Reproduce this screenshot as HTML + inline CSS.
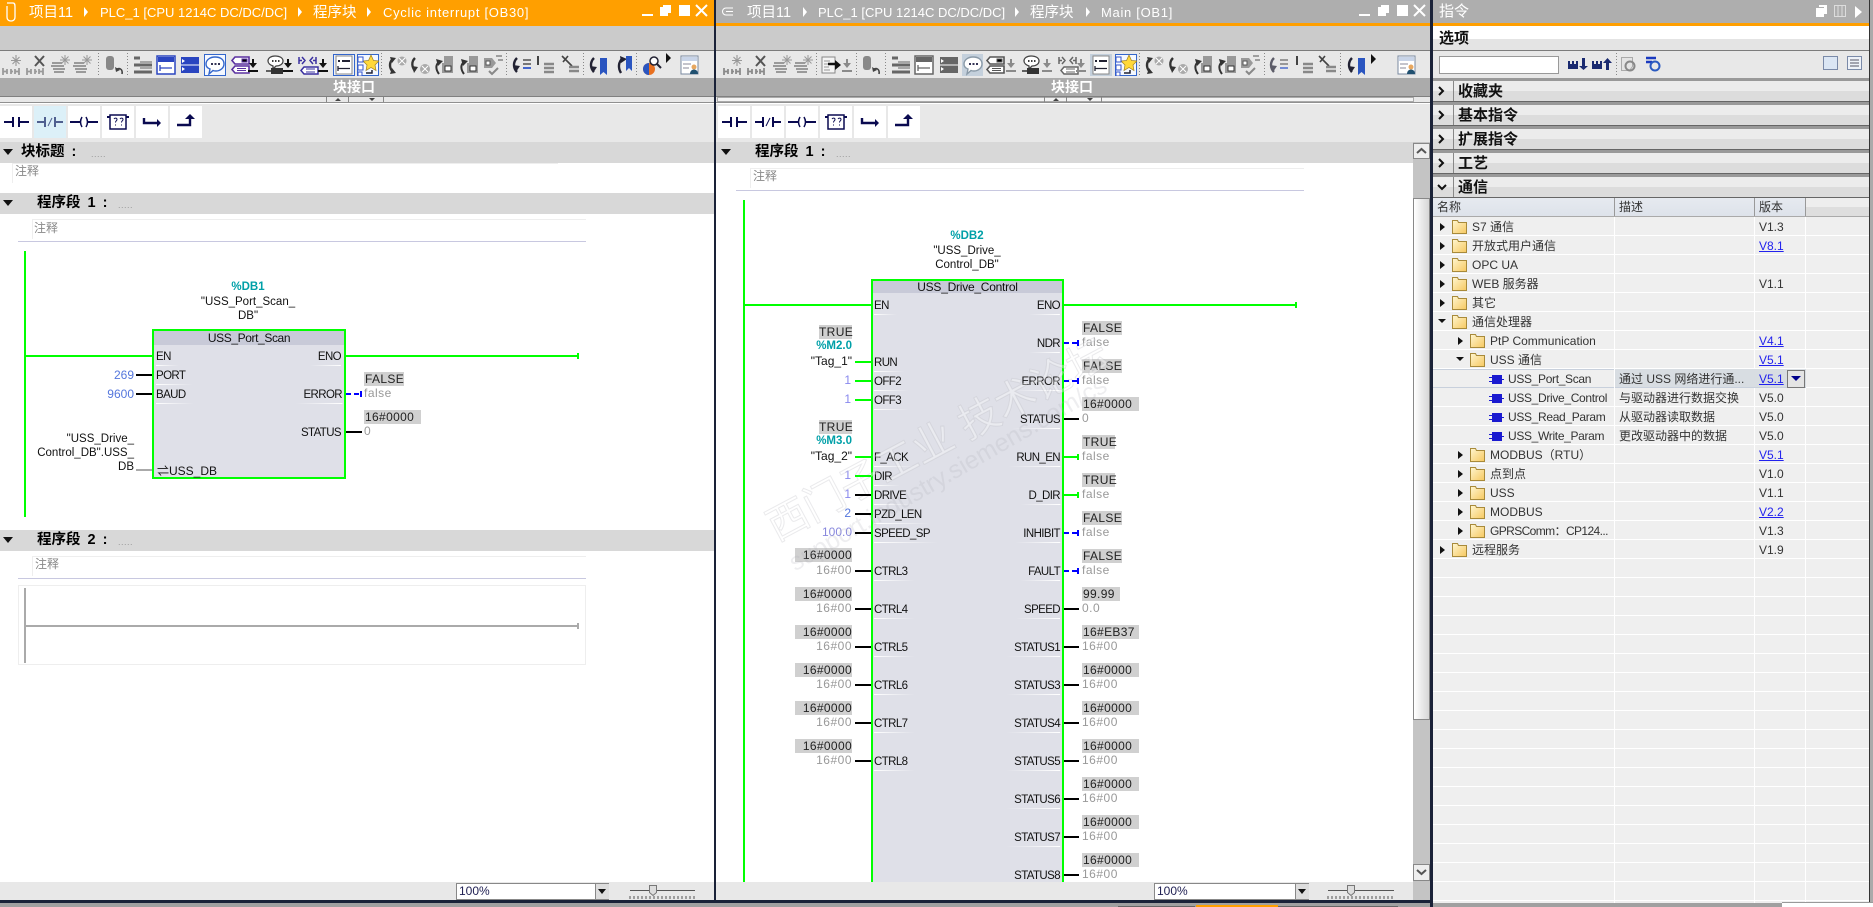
<!DOCTYPE html>
<html lang="zh"><head><meta charset="utf-8"><title>TIA Portal</title>
<style>
html,body{margin:0;padding:0;background:#fff}
#p{position:relative;width:1873px;height:907px;overflow:hidden;background:#fff;font:12px/14px "Liberation Sans","Noto Sans CJK SC",sans-serif;color:#111}
#p div,#p i,#p svg{position:absolute;display:block;font-style:normal;white-space:nowrap}
.r{transform:translateX(-100%)}
.c{transform:translateX(-50%);text-align:center}
.ti{font-size:13px;line-height:16px;top:5px;color:#fff}
.tc{font-size:14.5px}
.ts{letter-spacing:.7px}
.hd{background:#d8d8d8;height:21px}
.ht{font-size:14.500px;font-weight:bold;line-height:20px;color:#000;word-spacing:3px}
.dd{color:#999;font-size:9px;line-height:14px;letter-spacing:.5px}
.cm{color:#888;font-size:12px;line-height:16px}
.tl{color:#00a0a8;font-weight:bold;font-size:11.5px}
.sm{font-size:11.5px}
.pl,.pr{font-size:11.5px;letter-spacing:-.6px}
.pl::after,.pr::after{content:"";position:absolute;bottom:-2px;height:1px}
.pl::after{left:0;right:-8px;background:linear-gradient(90deg,#fff,rgba(255,255,255,0))}
.pr::after{right:0;left:-8px;background:linear-gradient(270deg,#fff,rgba(255,255,255,0))}
.x{background:#d0d0d0;height:14px;color:#222;letter-spacing:.35px;padding-left:1px;box-sizing:border-box}
.xr{background:#d0d0d0;height:14px;color:#222;letter-spacing:.35px;text-align:right;box-sizing:border-box}
.f{color:#999;letter-spacing:.5px}
.v{color:#5577dd}
.btn{background:#fff;width:32px;height:32px;top:106px}
.sec{left:1433px;width:436px;height:20px;background:linear-gradient(#ececec 0 50%,#dcdcdc 50%);border-bottom:1px solid #666;box-sizing:content-box}
.st{left:1458px;font-size:15px;font-weight:bold;line-height:20px;color:#111}
.n{color:#333}
.nm{color:#333;letter-spacing:-.33px}
.lk{color:#2222ee;text-decoration:underline}
</style></head><body><div id="p">

<!-- left pane chrome -->
<div style="left:0;top:0;width:714px;height:26px;background:#ff9f00"></div>
<div style="left:0;top:26px;width:714px;height:24px;background:#cbcbcb"></div>
<div style="left:0;top:50px;width:714px;height:1px;background:#7c7c7c"></div>
<div style="left:0;top:51px;width:714px;height:27px;background:#e8e8e8"></div>
<div style="left:0;top:78px;width:714px;height:18px;background:#ababab"></div>
<div style="left:0;top:96px;width:714px;height:46px;background:#e8e8e8"></div>
<div style="left:0;top:96px;width:714px;height:1px;background:#808080"></div>
<div style="left:0;top:102px;width:714px;height:1px;background:#909090"></div>
<div style="left:0;top:103px;width:714px;height:1px;background:#fff"></div>

<!-- right pane chrome -->
<div style="left:716px;top:0;width:715px;height:23px;background:#aeaeae"></div>
<div style="left:716px;top:23px;width:715px;height:3px;background:#ff9f00"></div>
<div style="left:716px;top:26px;width:715px;height:24px;background:#cbcbcb"></div>
<div style="left:716px;top:50px;width:715px;height:1px;background:#7c7c7c"></div>
<div style="left:716px;top:51px;width:715px;height:27px;background:#e8e8e8"></div>
<div style="left:716px;top:78px;width:715px;height:18px;background:#ababab"></div>
<div style="left:716px;top:96px;width:715px;height:46px;background:#e8e8e8"></div>
<div style="left:716px;top:96px;width:715px;height:1px;background:#808080"></div>
<div style="left:716px;top:102px;width:715px;height:1px;background:#909090"></div>
<div style="left:716px;top:103px;width:715px;height:1px;background:#fff"></div>

<!-- titles -->
<i class="ti tc" style="left:29px">项目11</i><i class="ti" style="left:100px">PLC_1 [CPU 1214C DC/DC/DC]</i><i class="ti tc" style="left:313px">程序块</i><i class="ti ts" style="left:383px">Cyclic interrupt [OB30]</i>
<i class="ti tc" style="left:747px">项目11</i><i class="ti" style="left:818px">PLC_1 [CPU 1214C DC/DC/DC]</i><i class="ti tc" style="left:1030px">程序块</i><i class="ti ts" style="left:1101px">Main [OB1]</i>

<i class="c" style="left:354px;top:80px;color:#fff;font-weight:bold;font-size:14px">块接口</i>
<i class="c" style="left:1072px;top:80px;color:#fff;font-weight:bold;font-size:14px">块接口</i>

<!-- ladder buttons -->
<div class="btn" style="left:0"></div><div class="btn" style="left:34px;background:#dcf0f8"></div><div class="btn" style="left:68px"></div><div class="btn" style="left:102px"></div><div class="btn" style="left:136px"></div><div class="btn" style="left:170px"></div>
<div class="btn" style="left:718px"></div><div class="btn" style="left:752px"></div><div class="btn" style="left:786px"></div><div class="btn" style="left:820px"></div><div class="btn" style="left:854px"></div><div class="btn" style="left:888px"></div>

<!-- left pane sections -->
<div class="hd" style="left:0;top:142px;width:714px"></div>
<i class="ht" style="left:21px;top:142px">块标题 :</i><i class="dd" style="left:91px;top:147px">.....</i>
<div style="left:12px;top:163px;width:546px;height:1px;background:#eee"></div><div style="left:12px;top:163px;width:1px;height:20px;background:#eee"></div>
<i class="cm" style="left:15px;top:163px">注释</i>
<div class="hd" style="left:0;top:193px;width:714px"></div>
<i class="ht" style="left:37px;top:193px">程序段 1 :</i><i class="dd" style="left:118px;top:198px">.....</i>
<div style="left:32px;top:219px;width:554px;height:1px;background:#eee"></div><div style="left:32px;top:219px;width:1px;height:20px;background:#eee"></div>
<i class="cm" style="left:34px;top:220px">注释</i>
<div style="left:18px;top:241px;width:568px;height:1px;background:#c8c8e0"></div>

<div class="hd" style="left:0;top:530px;width:714px"></div>
<i class="ht" style="left:37px;top:530px">程序段 2 :</i><i class="dd" style="left:118px;top:535px">.....</i>
<div style="left:32px;top:556px;width:554px;height:1px;background:#eee"></div><div style="left:32px;top:556px;width:1px;height:20px;background:#eee"></div>
<i class="cm" style="left:35px;top:556px">注释</i>
<div style="left:18px;top:578px;width:568px;height:1px;background:#c8c8e0"></div>
<div style="left:18px;top:585px;width:568px;height:80px;border:1px solid #eee;box-sizing:border-box"></div>

<!-- left FB block -->
<div style="left:152px;top:329px;width:194px;height:150px;box-sizing:border-box;border:2px solid #00ff00;background:#dfe0e8"></div>
<div style="left:154px;top:331px;width:190px;height:14px;background:#c8cad8;text-align:center;color:#111;letter-spacing:-.4px">USS_Port_Scan</div>
<i class="tl c" style="left:248px;top:280px">%DB1</i>
<i class="c sm" style="left:248px;top:295px">"USS_Port_Scan_</i><i class="c sm" style="left:248px;top:309px">DB"</i>
<i class="pl" style="left:156px;top:350px">EN</i><i class="pl" style="left:156px;top:369px">PORT</i><i class="pl" style="left:156px;top:388px">BAUD</i><i style="left:157px;top:464px">⇌USS_DB</i>
<i class="pr r" style="left:341px;top:350px">ENO</i><i class="pr r" style="left:342px;top:388px">ERROR</i><i class="r" style="left:341px;top:426px;font-size:11.5px;letter-spacing:-.6px">STATUS</i>
<i class="v r" style="left:134px;top:368px">269</i><i class="v r" style="left:134px;top:387px">9600</i>
<i class="r sm" style="left:134px;top:432px">"USS_Drive_</i><i class="r sm" style="left:134px;top:446px">Control_DB".USS_</i><i class="r sm" style="left:134px;top:460px">DB</i>
<div class="x" style="left:364px;top:372px;width:40px">FALSE</div><i class="f" style="left:364px;top:386px">false</i>
<div class="x" style="left:364px;top:410px;width:57px">16#0000</div><i class="f" style="left:364px;top:424px">0</i>

<!-- right pane sections -->
<div class="hd" style="left:716px;top:142px;width:697px"></div>
<i class="ht" style="left:755px;top:142px">程序段 1 :</i><i class="dd" style="left:836px;top:147px">.....</i>
<div style="left:750px;top:168px;width:554px;height:1px;background:#eee"></div><div style="left:750px;top:168px;width:1px;height:20px;background:#eee"></div>
<i class="cm" style="left:753px;top:168px">注释</i>
<div style="left:736px;top:190px;width:568px;height:1px;background:#c8c8e0"></div>

<!-- right FB block -->
<div style="left:871px;top:279px;width:193px;height:640px;box-sizing:border-box;border:2px solid #00ff00;background:#dfe0e8"></div>
<div style="left:873px;top:281px;width:189px;height:12px;line-height:12px;background:#c8cad8;text-align:center;color:#111;letter-spacing:-.25px">USS_Drive_Control</div>
<i class="tl c" style="left:967px;top:229px">%DB2</i>
<i class="c sm" style="left:967px;top:244px">"USS_Drive_</i><i class="c sm" style="left:967px;top:258px">Control_DB"</i>

<i class="pl" style="left:874px;top:299px">EN</i><i class="pl" style="left:874px;top:356px">RUN</i><i class="pl" style="left:874px;top:375px">OFF2</i><i class="pl" style="left:874px;top:394px">OFF3</i><i class="pl" style="left:874px;top:451px">F_ACK</i><i class="pl" style="left:874px;top:470px">DIR</i><i class="pl" style="left:874px;top:489px">DRIVE</i><i class="pl" style="left:874px;top:508px">PZD_LEN</i><i class="pl" style="left:874px;top:527px">SPEED_SP</i><i class="pl" style="left:874px;top:565px">CTRL3</i><i class="pl" style="left:874px;top:603px">CTRL4</i><i class="pl" style="left:874px;top:641px">CTRL5</i><i class="pl" style="left:874px;top:679px">CTRL6</i><i class="pl" style="left:874px;top:717px">CTRL7</i><i class="pl" style="left:874px;top:755px">CTRL8</i>

<i class="pr r" style="left:1060px;top:299px">ENO</i><i class="pr r" style="left:1060px;top:337px">NDR</i><i class="pr r" style="left:1060px;top:375px">ERROR</i><i class="pr r" style="left:1060px;top:413px">STATUS</i><i class="pr r" style="left:1060px;top:451px">RUN_EN</i><i class="pr r" style="left:1060px;top:489px">D_DIR</i><i class="pr r" style="left:1060px;top:527px">INHIBIT</i><i class="pr r" style="left:1060px;top:565px">FAULT</i><i class="pr r" style="left:1060px;top:603px">SPEED</i><i class="pr r" style="left:1060px;top:641px">STATUS1</i><i class="pr r" style="left:1060px;top:679px">STATUS3</i><i class="pr r" style="left:1060px;top:717px">STATUS4</i><i class="pr r" style="left:1060px;top:755px">STATUS5</i><i class="pr r" style="left:1060px;top:793px">STATUS6</i><i class="pr r" style="left:1060px;top:831px">STATUS7</i><i class="pr r" style="left:1060px;top:869px">STATUS8</i>

<!-- right inputs -->
<div class="xr" style="left:819px;top:325px;width:33px">TRUE</div><i class="tl r" style="left:852px;top:339px">%M2.0</i><i class="r" style="left:852px;top:354px">"Tag_1"</i>
<i class="v r" style="left:851px;top:373px;color:#8888ee">1</i><i class="v r" style="left:851px;top:392px;color:#8888ee">1</i>
<div class="xr" style="left:819px;top:420px;width:33px">TRUE</div><i class="tl r" style="left:852px;top:434px">%M3.0</i><i class="r" style="left:852px;top:449px">"Tag_2"</i>
<i class="v r" style="left:851px;top:468px;color:#8888ee">1</i><i class="v r" style="left:851px;top:487px;color:#8888ee">1</i><i class="v r" style="left:851px;top:506px">2</i><i class="v r" style="left:852px;top:525px;color:#8888dd">100.0</i>

<div class="xr" style="left:795px;top:548px;width:57px">16#0000</div><i class="f r" style="left:852px;top:563px">16#00</i>
<div class="xr" style="left:795px;top:587px;width:57px">16#0000</div><i class="f r" style="left:852px;top:601px">16#00</i>
<div class="xr" style="left:795px;top:625px;width:57px">16#0000</div><i class="f r" style="left:852px;top:639px">16#00</i>
<div class="xr" style="left:795px;top:663px;width:57px">16#0000</div><i class="f r" style="left:852px;top:677px">16#00</i>
<div class="xr" style="left:795px;top:701px;width:57px">16#0000</div><i class="f r" style="left:852px;top:715px">16#00</i>
<div class="xr" style="left:795px;top:739px;width:57px">16#0000</div><i class="f r" style="left:852px;top:753px">16#00</i>

<!-- right outputs -->
<div class="x" style="left:1082px;top:321px;width:40px">FALSE</div><i class="f" style="left:1082px;top:335px">false</i>
<div class="x" style="left:1082px;top:359px;width:40px">FALSE</div><i class="f" style="left:1082px;top:373px">false</i>
<div class="x" style="left:1082px;top:397px;width:57px">16#0000</div><i class="f" style="left:1082px;top:411px">0</i>
<div class="x" style="left:1082px;top:435px;width:33px">TRUE</div><i class="f" style="left:1082px;top:449px">false</i>
<div class="x" style="left:1082px;top:473px;width:33px">TRUE</div><i class="f" style="left:1082px;top:487px">false</i>
<div class="x" style="left:1082px;top:511px;width:40px">FALSE</div><i class="f" style="left:1082px;top:525px">false</i>
<div class="x" style="left:1082px;top:549px;width:40px">FALSE</div><i class="f" style="left:1082px;top:563px">false</i>
<div class="x" style="left:1082px;top:587px;width:38px">99.99</div><i class="f" style="left:1082px;top:601px">0.0</i>
<div class="x" style="left:1082px;top:625px;width:57px">16#EB37</div><i class="f" style="left:1082px;top:639px">16#00</i>
<div class="x" style="left:1082px;top:663px;width:57px">16#0000</div><i class="f" style="left:1082px;top:677px">16#00</i>
<div class="x" style="left:1082px;top:701px;width:57px">16#0000</div><i class="f" style="left:1082px;top:715px">16#00</i>
<div class="x" style="left:1082px;top:739px;width:57px">16#0000</div><i class="f" style="left:1082px;top:753px">16#00</i>
<div class="x" style="left:1082px;top:777px;width:57px">16#0000</div><i class="f" style="left:1082px;top:791px">16#00</i>
<div class="x" style="left:1082px;top:815px;width:57px">16#0000</div><i class="f" style="left:1082px;top:829px">16#00</i>
<div class="x" style="left:1082px;top:853px;width:57px">16#0000</div><i class="f" style="left:1082px;top:867px">16#00</i>

<!-- watermark -->
<i style="left:938px;top:440px;font-size:41px;line-height:46px;color:rgba(255,255,255,.35);-webkit-text-stroke:1px rgba(170,170,180,.25);transform:translate(-50%,-50%) rotate(-28deg)">西门子工业 技术论坛</i>
<i style="left:948px;top:474px;font-size:25px;line-height:28px;color:rgba(170,170,180,.2);transform:translate(-50%,-50%) rotate(-30deg)">support.industry.siemens.com/cs</i>

<!-- scrollbar -->
<div style="left:1413px;top:142px;width:17px;height:758px;background:#c4c4c4"></div>
<div style="left:1413px;top:143px;width:17px;height:16px;box-sizing:border-box;background:#eee;border:1px solid #888"></div>
<div style="left:1413px;top:198px;width:17px;height:522px;box-sizing:border-box;background:linear-gradient(90deg,#fff,#d6d6d6);border:1px solid #888"></div>
<div style="left:1413px;top:864px;width:17px;height:17px;box-sizing:border-box;background:#eee;border:1px solid #888"></div>

<!-- bottom bars -->
<div style="left:0;top:882px;width:714px;height:18px;background:#e8e8e8"></div>
<div style="left:716px;top:882px;width:697px;height:18px;background:#e8e8e8"></div>
<div style="left:456px;top:883px;width:153px;height:17px;box-sizing:border-box;background:#fff;border:1px solid #888"></div>
<i style="left:459px;top:884px;color:#225">100%</i>
<div style="left:595px;top:884px;width:13px;height:15px;background:#ddd;border-left:1px solid #888"></div>
<div style="left:1154px;top:883px;width:155px;height:17px;box-sizing:border-box;background:#fff;border:1px solid #888"></div>
<i style="left:1157px;top:884px;color:#225">100%</i>
<div style="left:1295px;top:884px;width:13px;height:15px;background:#ddd;border-left:1px solid #888"></div>
<div style="left:0;top:900px;width:1430px;height:3px;background:#1a2238"></div>
<div style="left:0;top:903px;width:1873px;height:4px;background:#a0a0a0"></div>
<div style="left:1118px;top:906px;width:77px;height:1px;background:#666"></div>
<div style="left:1196px;top:905px;width:82px;height:2px;background:#ff9f00"></div>
<div style="left:1278px;top:906px;width:120px;height:1px;background:#666"></div>

<!-- dark separators -->
<div style="left:714px;top:0;width:2px;height:903px;background:#1a2238"></div>
<div style="left:1430px;top:0;width:3px;height:907px;background:#1a2238"></div>

<!-- instructions panel -->
<div style="left:1433px;top:0;width:436px;height:23px;background:#aeaeae"></div>
<div style="left:1433px;top:23px;width:436px;height:3px;background:#ff9f00"></div>
<i style="left:1439px;top:2px;font-size:15px;line-height:20px;color:#fff">指令</i>
<div style="left:1433px;top:26px;width:436px;height:24px;background:linear-gradient(#fff 0 55%,#e4e4e4 55%)"></div>
<i class="st" style="left:1439px;top:29px">选项</i>
<div style="left:1433px;top:50px;width:436px;height:1px;background:#7c7c7c"></div>
<div style="left:1433px;top:51px;width:436px;height:27px;background:#e8e8e8"></div>
<div style="left:1439px;top:56px;width:120px;height:18px;box-sizing:border-box;background:#fff;border:1px solid #999"></div>
<div style="left:1433px;top:78px;width:436px;height:125px;background:#999"></div>
<div class="sec" style="top:81px"></div><div class="sec" style="top:105px"></div><div class="sec" style="top:129px"></div><div class="sec" style="top:153px"></div><div class="sec" style="top:177px"></div>
<i class="st" style="top:82px">收藏夹</i><i class="st" style="top:106px">基本指令</i><i class="st" style="top:130px">扩展指令</i><i class="st" style="top:154px">工艺</i><i class="st" style="top:178px">通信</i>
<div style="left:1453px;top:81px;width:1px;height:20px;background:#888"></div><div style="left:1453px;top:105px;width:1px;height:20px;background:#888"></div><div style="left:1453px;top:129px;width:1px;height:20px;background:#888"></div><div style="left:1453px;top:153px;width:1px;height:20px;background:#888"></div><div style="left:1453px;top:177px;width:1px;height:20px;background:#888"></div>

<!-- table -->
<div style="left:1433px;top:198px;width:436px;height:19px;background:linear-gradient(#e6eaf0,#dde2ea)"></div>
<div style="left:1806px;top:198px;width:63px;height:18px;background:linear-gradient(#eee 0 50%,#dedede 50%)"></div>
<div style="left:1433px;top:216px;width:436px;height:1px;background:#aaa"></div>
<div style="left:1614px;top:198px;width:1px;height:18px;background:#999"></div><div style="left:1754px;top:198px;width:1px;height:18px;background:#999"></div><div style="left:1805px;top:198px;width:1px;height:18px;background:#999"></div>
<i class="n" style="left:1437px;top:200px">名称</i><i class="n" style="left:1619px;top:200px">描述</i><i class="n" style="left:1759px;top:200px">版本</i>
<div style="left:1433px;top:217px;width:436px;height:686px;background:repeating-linear-gradient(180deg,#efefef 0 18px,#fff 18px 19px)"></div>
<div style="left:1614px;top:217px;width:1px;height:686px;background:#fff"></div><div style="left:1754px;top:217px;width:1px;height:686px;background:#fff"></div><div style="left:1805px;top:217px;width:1px;height:686px;background:#fff"></div>
<div style="left:1433px;top:369px;width:181px;height:19px;box-sizing:border-box;border-top:1px solid #c8d0dc;border-bottom:1px solid #c8d0dc"></div>
<div style="left:1615px;top:369px;width:191px;height:19px;background:#d8dde2;border-bottom:1px solid #c8d0dc;box-sizing:border-box"></div>
<div style="left:1787px;top:370px;width:18px;height:18px;box-sizing:border-box;background:#e4e4e4;border:1px solid #777"></div>

<i class="n" style="left:1472px;top:220px">S7 通信</i><i class="n" style="left:1759px;top:220px">V1.3</i>
<i class="n" style="left:1472px;top:239px">开放式用户通信</i><i class="lk" style="left:1759px;top:239px">V8.1</i>
<i class="n" style="left:1472px;top:258px">OPC UA</i>
<i class="n" style="left:1472px;top:277px">WEB 服务器</i><i class="n" style="left:1759px;top:277px">V1.1</i>
<i class="n" style="left:1472px;top:296px">其它</i>
<i class="n" style="left:1472px;top:315px">通信处理器</i>
<i class="n" style="left:1490px;top:334px">PtP Communication</i><i class="lk" style="left:1759px;top:334px">V4.1</i>
<i class="n" style="left:1490px;top:353px">USS 通信</i><i class="lk" style="left:1759px;top:353px">V5.1</i>
<i class="nm" style="left:1508px;top:372px">USS_Port_Scan</i><i class="n" style="left:1619px;top:372px">通过 USS 网络进行通...</i><i class="lk" style="left:1759px;top:372px">V5.1</i>
<i class="nm" style="left:1508px;top:391px">USS_Drive_Control</i><i class="n" style="left:1619px;top:391px">与驱动器进行数据交换</i><i class="n" style="left:1759px;top:391px">V5.0</i>
<i class="nm" style="left:1508px;top:410px">USS_Read_Param</i><i class="n" style="left:1619px;top:410px">从驱动器读取数据</i><i class="n" style="left:1759px;top:410px">V5.0</i>
<i class="nm" style="left:1508px;top:429px">USS_Write_Param</i><i class="n" style="left:1619px;top:429px">更改驱动器中的数据</i><i class="n" style="left:1759px;top:429px">V5.0</i>
<i class="n" style="left:1490px;top:448px">MODBUS（RTU）</i><i class="lk" style="left:1759px;top:448px">V5.1</i>
<i class="n" style="left:1490px;top:467px">点到点</i><i class="n" style="left:1759px;top:467px">V1.0</i>
<i class="n" style="left:1490px;top:486px">USS</i><i class="n" style="left:1759px;top:486px">V1.1</i>
<i class="n" style="left:1490px;top:505px">MODBUS</i><i class="lk" style="left:1759px;top:505px">V2.2</i>
<i class="n" style="left:1490px;top:524px;letter-spacing:-.6px">GPRSComm：CP124...</i><i class="n" style="left:1759px;top:524px">V1.3</i>
<i class="n" style="left:1472px;top:543px">远程服务</i><i class="n" style="left:1759px;top:543px">V1.9</i>

<div style="left:1869px;top:0;width:1px;height:903px;background:#333"></div>
<div style="left:1870px;top:0;width:3px;height:903px;background:#aaa"></div>
<div style="left:1782px;top:902px;width:91px;height:5px;background:#fff;border-top:1px solid #999;box-sizing:border-box"></div>

<!-- graphics overlay -->
<svg width="1873" height="907" style="left:0;top:0" viewBox="0 0 1873 907">
<defs>
<linearGradient id="fg" x1="0" y1="0" x2="1" y2="1"><stop offset="0" stop-color="#fff6d0"/><stop offset="1" stop-color="#f6c860"/></linearGradient>
<symbol id="nw" viewBox="0 0 22 22"><path d="M1 14v7M1 17.500h4M5 15v5M9 15v5M9 17.500h2M13 15v5M13 17.500h4M17 14v7" fill="none" stroke="currentColor" stroke-width="1.800"/><path d="M14 1v11M9 6.500h10M10.500 3l7 7M17.500 3l-7 7" stroke="#999" stroke-width="1.100"/></symbol>
<symbol id="nx" viewBox="0 0 22 22"><path d="M1 14v7M1 17.500h4M5 15v5M9 15v5M9 17.500h2M13 15v5M13 17.500h4M17 14v7" fill="none" stroke="currentColor" stroke-width="1.800"/><path d="M9 2l9 10M18 2l-9 10" stroke="#555" stroke-width="2"/></symbol>
<symbol id="ln" viewBox="0 0 22 22"><path d="M2 9h10M1 12h13M3 15h12M4 18h10" stroke="#9a9a9a" stroke-width="2"/><path d="M15 1v10M10 6h10M11.500 2.500l7 7M18.500 2.500l-7 7" stroke="#999" stroke-width="1"/></symbol>
<symbol id="cy" viewBox="0 0 22 22"><rect x="3" y="2" width="8" height="14" rx="3" fill="#888"/><path d="M13 16c3-3 7-1 6 4" fill="none" stroke="#444" stroke-width="1.600"/><path d="M12 13l1 5 4-2z" fill="#444"/></symbol>
<symbol id="ls" viewBox="0 0 22 22"><path d="M2 4h6M2 11h18M2 18h18" stroke="currentColor" stroke-width="3"/><path d="M8 8h12M8 14h12" stroke="currentColor" stroke-width="1"/></symbol>
<symbol id="bx" viewBox="0 0 22 22"><rect x="2" y="2" width="18" height="18" fill="#fff" stroke="currentColor" stroke-width="1.500"/><path d="M3 3h16v5H3z" fill="currentColor"/><path d="M5 11v6M5 14h12" stroke="currentColor" stroke-width="1.300"/></symbol>
<symbol id="bh" viewBox="0 0 22 22"><rect x="2" y="3" width="18" height="16" fill="currentColor"/><path d="M2 11h18" stroke="#fff"/><path d="M3 5l3 2-3 2M3 13l3 2-3 2" fill="#fff"/></symbol>
<symbol id="bb" viewBox="0 0 22 22"><path d="M11 3c6 0 9 3 9 7s-4 7-8 7c-1 0-2 0-3-.5L5 20l1-5C3 14 2 12 2 10c0-4 4-7 9-7z" fill="#fff" stroke="currentColor" stroke-width="1.400"/><path d="M7 10h2M10.500 10h2M14 10h2" stroke="#335" stroke-width="2"/></symbol>
<symbol id="dc" viewBox="0 0 22 22"><rect x="2" y="3" width="13" height="16" fill="#f4f4f4" stroke="#888"/><path d="M4 7h6M4 10h5M4 13h5M4 16h6" stroke="#999"/><path d="M8 10h8" stroke="#111" stroke-width="2.500"/><path d="M15 6l6 5-6 5z" fill="#111"/></symbol>
<symbol id="tg" viewBox="0 0 22 22"><path d="M6 3h14v7H6L3 6.500zM6 12h14v7H6l-3-3.500z" fill="#fff" stroke="currentColor" stroke-width="1.600"/><path d="M13 5h5v3h-5zM8 14.500h9M8 16.500h9" stroke="currentColor"/></symbol>
<symbol id="ms" viewBox="0 0 22 22"><path d="M10 2c5 0 8 2 8 5s-3 5-7 5l-3 3v-3C5 11 3 9 3 7c0-3 3-5 7-5z" fill="#fff" stroke="#444" stroke-width="1.300"/><path d="M7 7h1.500M10 7h1.500M13 7h1.500" stroke="#222" stroke-width="1.800"/><path d="M6 14h12v6H6z" fill="#333"/><path d="M1 17h5" stroke="#333" stroke-width="1.500"/></symbol>
<symbol id="t2" viewBox="0 0 22 22"><path d="M2 3v7M2 6.500h3M5 3l3 3.500L5 10M16 3l-3 3.500 3 3.500M16 6.500h3M19 3v7" fill="none" stroke="currentColor" stroke-width="1.500"/><path d="M7 13h14v7H7l-3-3.500z" fill="#fff" stroke="currentColor" stroke-width="1.500"/><path d="M9 15h9M9 18h9" stroke="currentColor"/></symbol>
<symbol id="dn" viewBox="0 0 12 22"><path d="M6 5v6" stroke="currentColor" stroke-width="2"/><path d="M2 9h8l-4 5z" fill="currentColor"/><path d="M1 17h10" stroke="currentColor" stroke-width="2"/></symbol>
<symbol id="li" viewBox="0 0 22 22"><rect x="3" y="2" width="16" height="18" fill="#fff" stroke="#888"/><path d="M5 7h2M9 7h8" stroke="#223" stroke-width="2"/><path d="M5 12v5M5 14.500h12" stroke="#223" stroke-width="1.300"/></symbol>
<symbol id="sr" viewBox="0 0 22 22"><path d="M14 1l2.500 5.500 5.500.5-4 4 1 5.500-5-3-5 3 1-5.500-4-4 5.500-.5z" fill="#ffd83a" stroke="#a08020" stroke-width=".7"/><path d="M1 3h5v5H1zM1 11h5v5H1zM1 18h4v4H1z" fill="#fff" stroke="#3355cc"/><path d="M15 16v3H9" fill="none" stroke="#223" stroke-width="1.500"/></symbol>
<symbol id="bk" viewBox="0 0 22 22"><path d="M7 5C3 8 3 14 7 18" fill="none" stroke="#333" stroke-width="2.400"/><path d="M4 3l6 1-4 5zM4 20l6-1-4-5z" fill="#333"/><circle cx="16" cy="7" r="4.500" fill="#aaa"/><path d="M13 4l6 6M19 4l-6 6" stroke="#fff"/></symbol>
<symbol id="bc" viewBox="0 0 22 22"><path d="M5 4C1 8 2 13 5 17" fill="none" stroke="#333" stroke-width="2.400"/><path d="M2 12l6 1-4 6z" fill="#333"/><circle cx="15" cy="15" r="5" fill="#aaa"/><path d="M12 12l6 6M18 12l-6 6" stroke="#fff"/></symbol>
<symbol id="bd" viewBox="0 0 22 22"><path d="M6 8C2 11 3 16 6 20" fill="none" stroke="#333" stroke-width="2"/><path d="M3 5l7 2-5 5z" fill="#333"/><path d="M11 2h9v17H9V9h2z" fill="#999"/><path d="M12 12h6v5h-6z" fill="#fff" stroke="#333"/></symbol>
<symbol id="be" viewBox="0 0 22 22"><path d="M2 4h8l4 5-4 5H2z" fill="#999"/><path d="M14 2h6M16 6h5M4 7h4v4H4z" stroke="#555" fill="#fff"/><path d="M7 17l3 3 6-6" fill="none" stroke="#888" stroke-width="2"/></symbol>
<symbol id="gl" viewBox="0 0 22 22"><path d="M6 4C2 8 2 14 6 18" fill="none" stroke="#223" stroke-width="2.400"/><path d="M2 11l7 1-4 6z" fill="#223"/><path d="M12 6h8M12 10h8" stroke="#777" stroke-width="2"/><path d="M12 14h8" stroke="#4466cc" stroke-width="2"/></symbol>
<symbol id="gm" viewBox="0 0 22 22"><path d="M4 2v9" stroke="#444" stroke-width="2"/><path d="M10 10h10M10 14h10M10 18h10" stroke="#888" stroke-width="2.500"/></symbol>
<symbol id="gn" viewBox="0 0 22 22"><path d="M3 2l10 10M9 2L4 8" stroke="#444" stroke-width="1.600"/><path d="M10 13h10M10 17h10" stroke="#888" stroke-width="2.500"/></symbol>
<symbol id="ga" viewBox="0 0 22 22"><path d="M7 4C3 8 3 14 7 18" fill="none" stroke="#223" stroke-width="2.400"/><path d="M3 12l7 1-4 6z" fill="#223"/><path d="M13 4h7v17l-3.500-3-3.500 3z" fill="#2a55c0"/></symbol>
<symbol id="gb" viewBox="0 0 22 22"><path d="M11 4C6 8 6 14 9 19" fill="none" stroke="#223" stroke-width="2.400"/><path d="M8 2l7 3-6 4z" fill="#223"/><path d="M14 2h6v15l-3-3-3 3z" fill="#2a55c0"/></symbol>
<symbol id="sc" viewBox="0 0 22 22"><circle cx="8" cy="15" r="6" fill="#e87020"/><path d="M8 9a6 6 0 0 0 0 12z" fill="#2a55c0"/><circle cx="13" cy="7" r="4" fill="#fff" stroke="#223" stroke-width="1.500"/><path d="M16 10l4 4" stroke="#223" stroke-width="2"/></symbol>
<symbol id="us" viewBox="0 0 22 22"><rect x="2" y="2" width="17" height="18" fill="#fff" stroke="#7a8aa0"/><path d="M3 3h15v4H3z" fill="#c8d4e8"/><path d="M4 10h8M4 14h6" stroke="#889"/><circle cx="15" cy="13" r="2.500" fill="#e8a860"/><path d="M11 20c0-6 8-6 8 0z" fill="#205070"/></symbol>
<symbol id="fo" viewBox="0 0 15 14"><path d="M.5 13.500V.5h5l1 2h8v11z" fill="url(#fg)" stroke="#a88a3a"/></symbol>
<symbol id="c1" viewBox="0 0 32 32"><path d="M4 16h9M13 11v10M19 11v10M19 16h10" fill="none" stroke="#0a0a50" stroke-width="2"/></symbol>
<symbol id="c2" viewBox="0 0 32 32"><path d="M3 16h8M11 11v10M21 11v10M21 16h8" fill="none" stroke="currentColor" stroke-width="2"/><path d="M14 20l4-8" stroke="currentColor"/></symbol>
<symbol id="c3" viewBox="0 0 32 32"><path d="M2 16h10M20 16h10" stroke="#0a0a50" stroke-width="2"/><path d="M14 11q-3 5 0 10M18 11q3 5 0 10" fill="none" stroke="#0a0a50" stroke-width="1.500"/></symbol>
<symbol id="c4" viewBox="0 0 32 32"><rect x="8" y="9" width="16" height="14" fill="#fff" stroke="#0a0a50" stroke-width="1.500"/><path d="M5 11h3M24 11h3" stroke="#0a0a50" stroke-width="2"/><path d="M12 13c1-1.500 3-1 3 .5s-1.500 1-1.500 3M18 13c1-1.500 3-1 3 .5s-1.500 1-1.500 3M13.500 18.500v1M19.500 18.500v1" fill="none" stroke="#0a0a50"/></symbol>
<symbol id="c5" viewBox="0 0 32 32"><path d="M8 12v5h14" fill="none" stroke="#0a0a50" stroke-width="2.400"/><path d="M21 13l4 4-4 4z" fill="#0a0a50"/></symbol>
<symbol id="c6" viewBox="0 0 32 32"><path d="M7 19h13v-7" fill="none" stroke="#0a0a50" stroke-width="2.400"/><path d="M15 13l5-5 5 5z" fill="#0a0a50"/></symbol>
</defs>

<!-- window icons -->
<g fill="#fff" stroke="none">
<path d="M7 3h6c2 0 2 2 2 4v10c0 2-1 4-4 4s-4-2-4-4V6" fill="none" stroke="#fff" stroke-width="1.300"/>
<path d="M84 7l4 5-4 5zM298 7l4 5-4 5zM367 7l4 5-4 5zM803 7l4 5-4 5zM1015 7l4 5-4 5zM1086 7l4 5-4 5z" fill="#fff"/>
<path d="M642 14h11v2h-11zM1359 14h11v2h-11zM660 7h8v9h-8zM1378 7h8v9h-8zM679 5h11v11h-11zM1397 5h11v11h-11zM1816 8h8v9h-8z"/>
<path d="M663 5h8v8h-3V7h-5zM1381 5h8v8h-3V7h-5zM1819 5h8v9h-3V7h-5z"/>
<path d="M1855 6l7 6-7 6z"/>
</g>
<path d="M696 5l11 11M707 5l-11 11M1414 5l11 11M1425 5l-11 11" stroke="#fff" stroke-width="2" fill="none"/>
<path d="M733 8h-7a3.500 3.500 0 0 0 0 7h7M733 11.500h-7" fill="none" stroke="#fff"/>
<path d="M1834.500 5.500h11v11h-11zM1838 6v10M1842 6v10" fill="none" stroke="#ddd"/>

<!-- left toolbar -->
<g color="#9a9a9a">
<use href="#nw" x="2" y="54" width="22" height="22"/><use href="#nx" x="26" y="54" width="22" height="22"/><use href="#ln" x="50" y="54" width="22" height="22"/><use href="#ln" x="72" y="54" width="22" height="22"/><use href="#cy" x="103" y="54" width="22" height="22"/>
<use href="#ls" x="132" y="54" width="22" height="22" color="#666"/>
<use href="#bx" x="155" y="54" width="22" height="22" color="#2a45c0"/><use href="#bh" x="179" y="54" width="22" height="22" color="#2a45c0"/>
<rect x="204.500" y="54.500" width="21" height="21" fill="#f4f8ff" stroke="#3366cc"/><use href="#bb" x="204" y="54" width="22" height="22" color="#3366cc"/>
<use href="#tg" x="229" y="54" width="22" height="22" color="#5a30a0"/><use href="#dn" x="247" y="54" width="12" height="22" color="#111"/>
<use href="#ms" x="265" y="54" width="22" height="22"/><use href="#dn" x="282" y="54" width="12" height="22" color="#111"/>
<use href="#t2" x="297" y="54" width="22" height="22" color="#3a30a0"/><use href="#dn" x="317" y="54" width="12" height="22" color="#111"/>
<rect x="333.500" y="54.500" width="21" height="21" fill="#eef2fa" stroke="#3366cc"/><use href="#li" x="333" y="54" width="22" height="22"/>
<rect x="357.500" y="54.500" width="21" height="21" fill="#f4f8ff" stroke="#3366cc"/><use href="#sr" x="357" y="54" width="22" height="22"/>
<use href="#bk" x="386" y="54" width="22" height="22"/><use href="#bc" x="410" y="54" width="22" height="22"/><use href="#bd" x="433" y="54" width="22" height="22"/><use href="#bd" x="458" y="54" width="22" height="22"/><use href="#be" x="482" y="54" width="22" height="22"/>
<use href="#gl" x="511" y="54" width="22" height="22"/><use href="#gm" x="534" y="54" width="22" height="22"/><use href="#gn" x="559" y="54" width="22" height="22"/>
<use href="#ga" x="587" y="54" width="22" height="22"/><use href="#gb" x="612" y="54" width="22" height="22"/>
<use href="#sc" x="641" y="54" width="22" height="22"/><path d="M666 53l5 5-5 5z" fill="#111"/><use href="#us" x="679" y="54" width="22" height="22"/>
</g>
<path d="M98.500 53v24M127.500 53v24M381.500 53v24M506.500 53v24M583.500 53v24M636.500 53v24M816.500 53v24M856.500 53v24M885.500 53v24M1139.500 53v24M1264.500 53v24M1340.500 53v24M1616.500 53v24" stroke="#888" stroke-dasharray="1 2" fill="none"/>

<!-- right toolbar -->
<g color="#8a8a8a">
<use href="#nw" x="723" y="54" width="22" height="22"/><use href="#nx" x="747" y="54" width="22" height="22"/><use href="#ln" x="772" y="54" width="22" height="22"/><use href="#ln" x="793" y="54" width="22" height="22"/>
<use href="#dc" x="820" y="54" width="22" height="22"/><use href="#dn" x="841" y="54" width="12" height="22"/>
<use href="#cy" x="860" y="54" width="22" height="22"/><use href="#ls" x="890" y="54" width="22" height="22" color="#666"/><use href="#bx" x="913" y="54" width="22" height="22" color="#666"/><use href="#bh" x="938" y="54" width="22" height="22" color="#666"/>
<rect x="962" y="54" width="21" height="22" fill="#c4d0dc"/><use href="#bb" x="962" y="54" width="22" height="22" color="#8a9aa8"/>
<use href="#tg" x="984" y="54" width="22" height="22" color="#555"/><use href="#dn" x="1005" y="54" width="12" height="22"/>
<use href="#ms" x="1021" y="54" width="22" height="22"/><use href="#dn" x="1041" y="54" width="12" height="22"/>
<use href="#t2" x="1057" y="54" width="22" height="22" color="#666"/><use href="#dn" x="1075" y="54" width="12" height="22"/>
<rect x="1090" y="54" width="22" height="22" fill="#c4d0dc"/><use href="#li" x="1090" y="54" width="22" height="22"/>
<rect x="1115.500" y="54.500" width="21" height="21" fill="#f4f8ff" stroke="#3366cc"/><use href="#sr" x="1115" y="54" width="22" height="22"/>
<use href="#bk" x="1143" y="54" width="22" height="22"/><use href="#bc" x="1168" y="54" width="22" height="22"/><use href="#bd" x="1192" y="54" width="22" height="22"/><use href="#bd" x="1216" y="54" width="22" height="22"/><use href="#be" x="1239" y="54" width="22" height="22"/>
<use href="#gl" x="1268" y="54" width="22" height="22" opacity=".7"/><use href="#gm" x="1293" y="54" width="22" height="22"/><use href="#gn" x="1316" y="54" width="22" height="22"/>
<use href="#ga" x="1345" y="54" width="22" height="22"/><path d="M1371 54l5 5-5 5z" fill="#111"/><use href="#us" x="1396" y="54" width="22" height="22"/>
</g>

<!-- resize handles -->
<path d="M326.500 97v5M348.500 97v5M383.500 97v5M1044.500 97v5M1066.500 97v5M1101.500 97v5" stroke="#888" fill="none"/>
<path d="M335 101l3-3 3 3zM369 98h6l-3 3zM1053 101l3-3 3 3zM1087 98h6l-3 3z" fill="#444"/>
<path d="M717.500 97.500h696v4h-696z" fill="#f4f4f4" stroke="#aaa"/>
<path d="M1044.500 97v5M1066.500 97v5M1101.500 97v5" stroke="#888" fill="none"/>
<path d="M1053 101l3-3 3 3zM1087 98h6l-3 3z" fill="#444"/>

<!-- ladder icons -->
<use href="#c1" x="0" y="106" width="32" height="32"/><use href="#c2" x="34" y="106" width="32" height="32" color="#506090"/><use href="#c3" x="68" y="106" width="32" height="32"/><use href="#c4" x="102" y="106" width="32" height="32"/><use href="#c5" x="136" y="106" width="32" height="32"/><use href="#c6" x="170" y="106" width="32" height="32"/>
<use href="#c1" x="718" y="106" width="32" height="32"/><use href="#c2" x="752" y="106" width="32" height="32" color="#0a0a50"/><use href="#c3" x="786" y="106" width="32" height="32"/><use href="#c4" x="820" y="106" width="32" height="32"/><use href="#c5" x="854" y="106" width="32" height="32"/><use href="#c6" x="888" y="106" width="32" height="32"/>

<!-- section triangles -->
<path d="M3 149h10l-5 6zM3 200h10l-5 6zM3 537h10l-5 6zM721 149h10l-5 6z" fill="#111"/>

<!-- wires -->
<g shape-rendering="crispEdges" fill="none" stroke-width="2">
<path d="M25 251V517M25 356h127M346 356H578M578 353v6" stroke="#00ff00"/>
<path d="M744 200V882M744 305h127M1064 305H1296M1296 302v6M855 362h16M855 381h16M855 400h16M855 457h16M855 476h16M1064 457h15M1078 454v6M1064 495h15M1078 492v6" stroke="#00ff00"/>
<path d="M136 375h16M136 394h16M346 432h16M855 495h16M855 514h16M855 533h16M855 571h16M855 609h16M855 647h16M855 685h16M855 723h16M855 761h16M1064 419h15M1064 609h15M1064 647h15M1064 685h15M1064 723h15M1064 761h15M1064 799h15M1064 837h15M1064 875h15" stroke="#000"/>
<path d="M136 470h16M25 588V663M25 626H578M578 623v6" stroke="#aaa"/>
<path d="M346 394h16M1064 343h15M1064 381h15M1064 533h15M1064 571h15" stroke="#0000ff" stroke-dasharray="5 3"/>
<path d="M361 391v6M1078 340v6M1078 378v6M1078 530v6M1078 568v6" stroke="#0000ff"/>
</g>

<!-- scrollbar arrows and combos -->
<path d="M1417 153l4.500-4 4.500 4M1417 870l4.500 4 4.500-4" fill="none" stroke="#555" stroke-width="2"/>
<path d="M598 889h8l-4 5zM1298 889h8l-4 5z" fill="#111"/>
<g fill="none" stroke="#555"><path d="M630 890.500h65M1328 890.500h66"/><path d="M630 896v3M634 896v3M638 896v3M642 896v3M646 896v3M650 896v3M654 896v3M658 896v3M662 896v3M666 896v3M670 896v3M674 896v3M678 896v3M682 896v3M686 896v3M690 896v3M694 896v3M1328 896v3M1332 896v3M1336 896v3M1340 896v3M1344 896v3M1348 896v3M1352 896v3M1356 896v3M1360 896v3M1364 896v3M1368 896v3M1372 896v3M1376 896v3M1380 896v3M1384 896v3M1388 896v3M1392 896v3"/></g>
<path d="M649.500 885.500h7v7l-3.500 3-3.500-3zM1347.500 885.500h7v7l-3.500 3-3.500-3z" fill="#ddd" stroke="#777"/>

<!-- instruction toolbar icons -->
<g fill="#1a2a70"><path d="M1568 61h2v6h-2zM1572 61h2v6h-2zM1576 61h2v6h-2zM1568 64h10v5h-10zM1582 58h3v8h3l-4.500 4-4.500-4h3zM1592 61h2v6h-2zM1596 61h2v6h-2zM1600 61h2v6h-2zM1592 64h10v5h-10zM1606 70h3v-7h3l-4.500-5-4.500 5h3z"/></g>
<path d="M1621.500 57.500h11v9l-3 4h-8z" fill="#e4e4e4" stroke="#aaa"/><circle cx="1630" cy="66" r="4.500" fill="none" stroke="#888" stroke-width="2"/>
<path d="M1646 58h10M1646 62h6" stroke="#1a3ac0" stroke-width="2.500"/><circle cx="1655" cy="66" r="4.500" fill="none" stroke="#2a5ac0" stroke-width="2"/>
<path d="M1823.500 56.500h14v13h-14z" fill="#dbe6f4" stroke="#7a8aa8"/><path d="M1847.500 56.500h14v13h-14z" fill="#eef2f8" stroke="#7a8aa8"/><path d="M1850 60h9M1850 63h9M1850 66h9" stroke="#556" fill="none"/>

<!-- section chevrons -->
<path d="M1439 87l4 4-4 4M1439 111l4 4-4 4M1439 135l4 4-4 4M1439 159l4 4-4 4M1438 185l4 4 4-4" fill="none" stroke="#111" stroke-width="2"/>

<!-- tree triangles -->
<path d="M1440 223l5 4-5 4zM1440 242l5 4-5 4zM1440 261l5 4-5 4zM1440 280l5 4-5 4zM1440 299l5 4-5 4zM1458 337l5 4-5 4zM1458 451l5 4-5 4zM1458 470l5 4-5 4zM1458 489l5 4-5 4zM1458 508l5 4-5 4zM1458 527l5 4-5 4zM1440 546l5 4-5 4zM1438 319h8l-4 4zM1456 357h8l-4 4z" fill="#111"/>
<use href="#fo" x="1452" y="220" width="15" height="14"/><use href="#fo" x="1452" y="239" width="15" height="14"/><use href="#fo" x="1452" y="258" width="15" height="14"/><use href="#fo" x="1452" y="277" width="15" height="14"/><use href="#fo" x="1452" y="296" width="15" height="14"/><use href="#fo" x="1452" y="315" width="15" height="14"/><use href="#fo" x="1470" y="334" width="15" height="14"/><use href="#fo" x="1470" y="353" width="15" height="14"/><use href="#fo" x="1470" y="448" width="15" height="14"/><use href="#fo" x="1470" y="467" width="15" height="14"/><use href="#fo" x="1470" y="486" width="15" height="14"/><use href="#fo" x="1470" y="505" width="15" height="14"/><use href="#fo" x="1470" y="524" width="15" height="14"/><use href="#fo" x="1452" y="543" width="15" height="14"/>
<g fill="#1a1ad0"><path d="M1492 375h10v9h-10zM1489 377h3v1h-3zM1489 381h3v1h-3zM1502 379h2v1h-2zM1492 394h10v9h-10zM1489 396h3v1h-3zM1489 400h3v1h-3zM1502 398h2v1h-2zM1492 413h10v9h-10zM1489 415h3v1h-3zM1489 419h3v1h-3zM1502 417h2v1h-2zM1492 432h10v9h-10zM1489 434h3v1h-3zM1489 438h3v1h-3zM1502 436h2v1h-2z"/></g>
<path d="M1791 376h10l-5 5z" fill="#00008b"/>
</svg>
</div></body></html>
